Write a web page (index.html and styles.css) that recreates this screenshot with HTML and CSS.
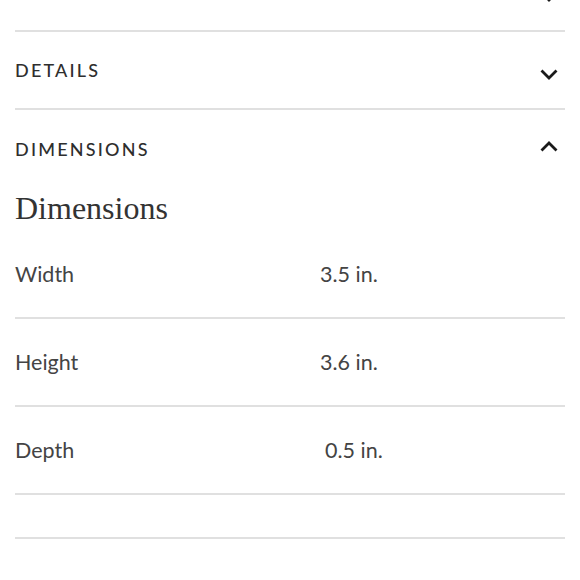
FILE: index.html
```html
<!DOCTYPE html>
<html>
<head>
<meta charset="utf-8">
<link rel="stylesheet" href="styles.css">
</head>
<body>
<div class="acc">
  <div class="head prev">
    <span class="title"></span>
    <svg class="chev" width="18" height="11" viewBox="0 0 18 11"><polyline points="1.5,1.5 9,9 16.5,1.5" fill="none" stroke="#1a1a1a" stroke-width="2.8"/></svg>
  </div>
  <div class="head">
    <span class="title">DETAILS</span>
    <svg class="chev" width="18" height="11" viewBox="0 0 18 11"><polyline points="1.5,1.5 9,9 16.5,1.5" fill="none" stroke="#1a1a1a" stroke-width="2.8"/></svg>
  </div>
  <div class="head open">
    <span class="title">DIMENSIONS</span>
    <svg class="chev" width="18" height="11" viewBox="0 0 18 11"><polyline points="1.5,9.5 9,2 16.5,9.5" fill="none" stroke="#1a1a1a" stroke-width="2.8"/></svg>
  </div>
  <h2 class="sub">Dimensions</h2>
  <div class="row"><span class="label">Width</span><span class="val">3.5 in.</span></div>
  <div class="row"><span class="label">Height</span><span class="val">3.6 in.</span></div>
  <div class="row"><span class="label">Depth</span><span class="val shift">0.5 in.</span></div>
  <div class="row empty"></div>
</div>
</body>
</html>
```
FILE: styles.css
```css
html, body {
  margin: 0;
  padding: 0;
  background: #fff;
  overflow: hidden;
}
body {
  font-family: "Lato", "Liberation Sans", sans-serif;
  color: #333;
}
.acc {
  padding: 0 15px;
}
.head {
  display: flex;
  align-items: center;
  justify-content: space-between;
  height: 76px;
  border-bottom: 2px solid #e0e0e0;
  padding: 0 7px 0 0;
}
.head.prev {
  margin-top: -46px;
}
.head.open {
  border-bottom: none;
  height: 78px;
}
.title {
  font-size: 18px;
  letter-spacing: 2.2px;
  font-weight: 500;
  color: #2e2e2e;
}
.chev {
  margin-top: 8px;
  display: block;
}
.open .chev {
  margin-top: -6px;
}
.sub {
  margin: 0;
  height: 43px;
  line-height: 40px;
  font-family: "Liberation Serif", serif;
  font-weight: normal;
  font-size: 32px;
  color: #333;
}
.row {
  display: grid;
  grid-template-columns: 305px 1fr;
  align-items: center;
  height: 86px;
  border-bottom: 2px solid #e0e0e0;
  font-size: 21.5px;
  color: #444;
}
.row.empty {
  height: 42px;
}
.val.shift {
  padding-left: 5px;
}
```
